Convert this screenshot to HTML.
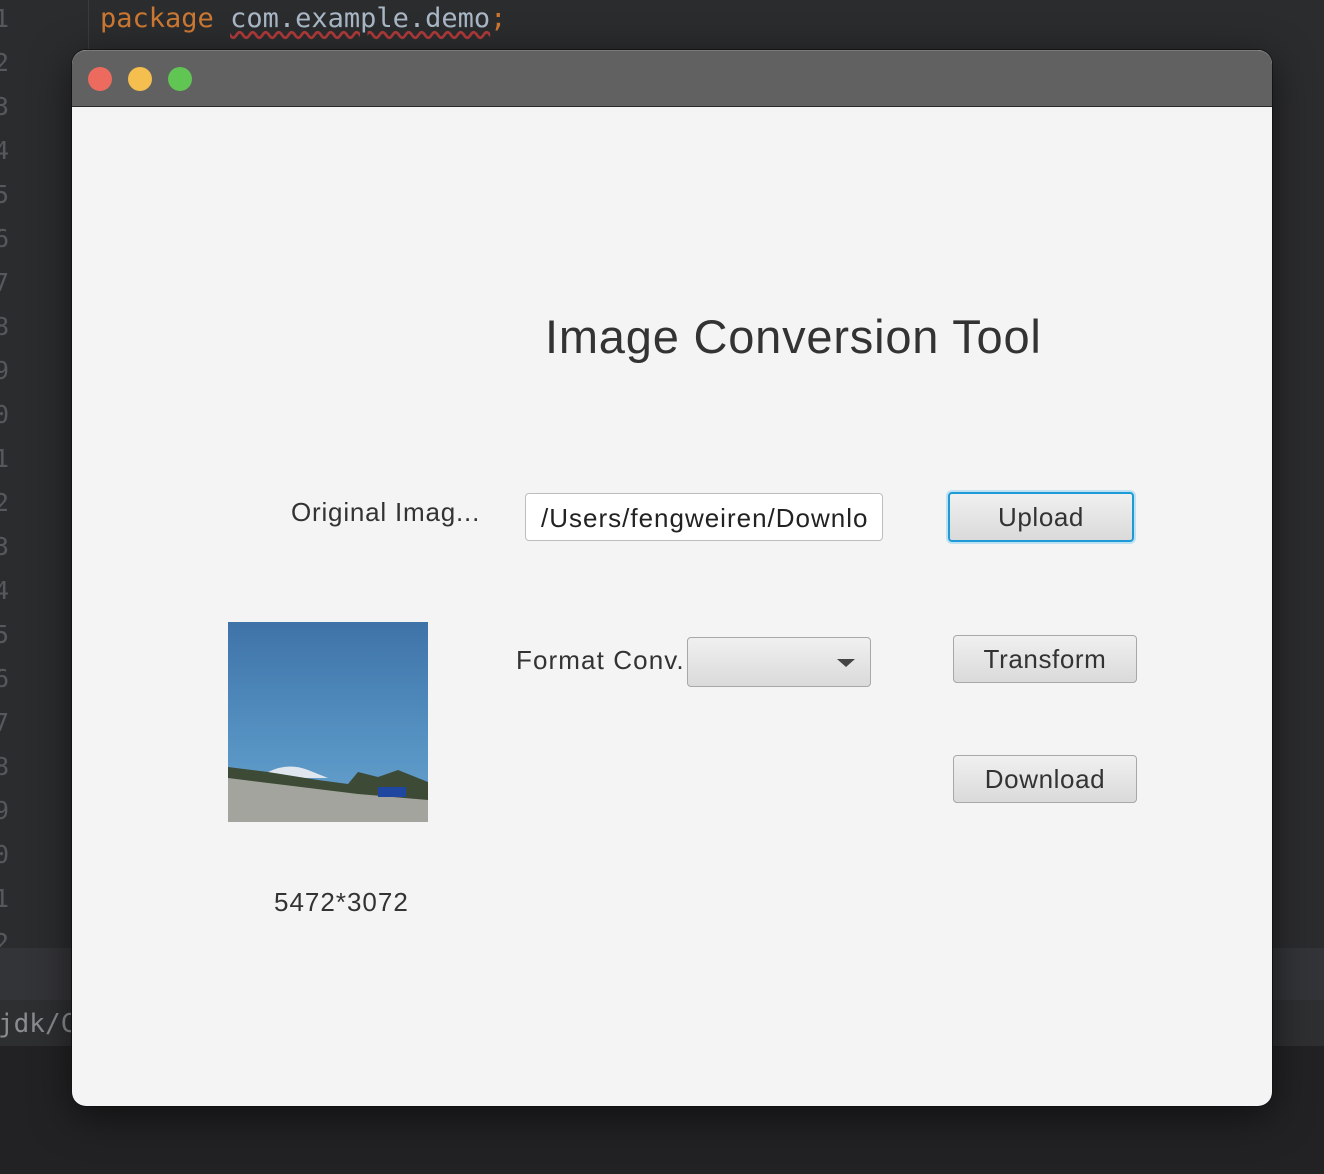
<!DOCTYPE html>
<html><head><meta charset="utf-8">
<style>
*{margin:0;padding:0;box-sizing:border-box}
html,body{width:1324px;height:1174px;overflow:hidden}
body{position:relative;background:#222325;font-family:"Liberation Sans",Arial,sans-serif}
.abs{position:absolute}
.ed{left:0;top:0;width:1324px;height:948px;background:#2b2c2e}
.gut{left:88px;top:0;width:1px;height:948px;background:#3a3b3d}
.ln{position:absolute;left:-6px;font-family:"DejaVu Sans Mono","Liberation Mono",monospace;font-size:25px;color:#55585d;line-height:22px}
.code{left:100px;top:5px;font-family:"DejaVu Sans Mono","Liberation Mono",monospace;font-size:27px;line-height:28px;color:#a9b7c6;white-space:pre}
.b1{left:0;top:948px;width:1324px;height:52px;background:#333437}
.b2{left:0;top:1000px;width:1324px;height:46px;background:#2e2f31}
.low{left:0;top:1046px;width:1324px;height:128px;background:#222224}
.win{left:72px;top:50px;width:1200px;height:1056px;border-radius:14px;background:#f4f4f4;overflow:hidden;box-shadow:0 10px 40px rgba(0,0,0,.55),0 0 0 1px #1a1a1a}
.tb{left:0;top:0;width:1200px;height:57px;background:#616161;border-bottom:1px solid #2a2a2a;border-top:1px solid #7a7a7a;border-radius:14px 14px 0 0}
.dot{position:absolute;top:16px;width:24px;height:24px;border-radius:50%}
.t{position:absolute;color:#333;white-space:nowrap;line-height:1}
.btn{position:absolute;border:1px solid #a8a8a8;border-radius:4px;background:linear-gradient(#f0f0f0,#dadada);display:flex;align-items:center;justify-content:center;font-size:26px;color:#333;letter-spacing:0.6px}
</style></head><body>
<div class="abs ed"></div>
<div class="abs gut"></div>
<div class="ln" style="top:8px">1</div>
<div class="ln" style="top:52px">2</div>
<div class="ln" style="top:96px">3</div>
<div class="ln" style="top:140px">4</div>
<div class="ln" style="top:184px">5</div>
<div class="ln" style="top:228px">6</div>
<div class="ln" style="top:272px">7</div>
<div class="ln" style="top:316px">8</div>
<div class="ln" style="top:360px">9</div>
<div class="ln" style="top:404px">0</div>
<div class="ln" style="top:448px">1</div>
<div class="ln" style="top:492px">2</div>
<div class="ln" style="top:536px">3</div>
<div class="ln" style="top:580px">4</div>
<div class="ln" style="top:624px">5</div>
<div class="ln" style="top:668px">6</div>
<div class="ln" style="top:712px">7</div>
<div class="ln" style="top:756px">8</div>
<div class="ln" style="top:800px">9</div>
<div class="ln" style="top:844px">0</div>
<div class="ln" style="top:888px">1</div>
<div class="ln" style="top:932px">2</div>
<div class="abs code"><span style="color:#cc7832">package</span> <span style="text-decoration:underline wavy #b03a3a;text-underline-offset:4px">com.example.demo</span><span style="color:#cc7832">;</span></div>
<div class="abs b1"></div>
<div class="abs b2"></div>
<div class="abs" style="left:-2px;top:1009px;font-family:'DejaVu Sans Mono',monospace;font-size:26px;color:#8a8c90">jdk/C</div>
<div class="abs low"></div>

<div class="abs win">
  <div class="abs tb">
    <div class="dot" style="left:16px;background:#ed6a5e"></div>
    <div class="dot" style="left:56px;background:#f5bf4f"></div>
    <div class="dot" style="left:96px;background:#61c554"></div>
  </div>
  <div class="t" style="left:473px;top:263px;font-size:47px;letter-spacing:0.8px">Image Conversion Tool</div>
  <div class="t" style="left:219px;top:449px;font-size:26px;letter-spacing:0.8px">Original Imag...</div>
  <div class="abs" style="left:453px;top:443px;width:358px;height:48px;background:#fff;border:1px solid #bdbdbd;border-radius:4px"></div>
  <div class="t" style="left:469px;top:455px;font-size:26px;color:#222;letter-spacing:1px">/Users/fengweiren/Downlo</div>
  <div class="btn" style="left:876px;top:442px;width:186px;height:50px;border:2px solid #1e9ad6;box-shadow:0 0 0 2px #bfe2f3">Upload</div>
  <div class="t" style="left:444px;top:597px;font-size:26px;letter-spacing:1.1px">Format Conv.</div>
  <div class="abs" style="left:615px;top:587px;width:184px;height:50px;border:1px solid #a8a8a8;border-radius:4px;background:linear-gradient(#f0f0f0,#dadada)">
    <div class="abs" style="left:149px;top:21px;width:0;height:0;border-left:9px solid transparent;border-right:9px solid transparent;border-top:8px solid #444"></div>
  </div>
  <div class="btn" style="left:881px;top:585px;width:184px;height:48px">Transform</div>
  <div class="btn" style="left:881px;top:705px;width:184px;height:48px">Download</div>
  <svg class="abs" style="left:156px;top:572px" width="200" height="200" viewBox="0 0 200 200">
    <defs><linearGradient id="sk" x1="0" y1="0" x2="0" y2="1"><stop offset="0" stop-color="#3f73a8"/><stop offset=".6" stop-color="#5592c2"/><stop offset="1" stop-color="#6aa3cf"/></linearGradient></defs>
    <rect width="200" height="200" fill="url(#sk)"/>
    <path d="M40 150 Q60 140 80 148 L100 156 L40 156Z" fill="#dfe6ee"/>
    <path d="M0 145 L40 150 L90 158 L120 162 L130 150 L150 155 L170 148 L200 160 L200 180 L0 170Z" fill="#3d4a35"/>
    <path d="M0 156 L130 172 L200 178 L200 200 L0 200Z" fill="#a4a49f"/>
    <rect x="150" y="165" width="28" height="10" fill="#1f47a0"/>
  </svg>
  <div class="t" style="left:202px;top:839px;font-size:26px;letter-spacing:1px">5472*3072</div>
</div>
</body></html>
